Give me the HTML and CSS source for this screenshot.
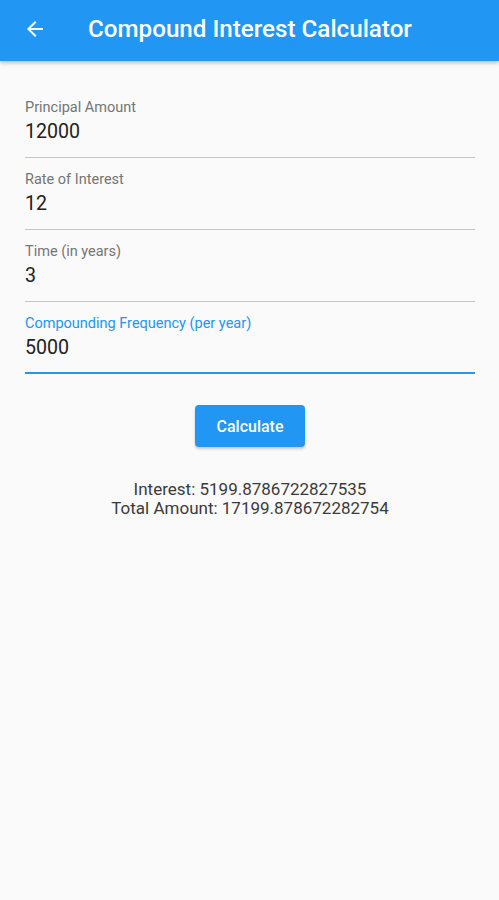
FILE: index.html
```html
<!DOCTYPE html>
<html>
<head>
<meta charset="utf-8">
<link rel="stylesheet" href="styles.css">
</head>
<body>
<header class="appbar">
  <button class="back" aria-label="Back">
    <svg width="24" height="24" viewBox="0 0 24 24"><path fill="#fff" d="M20 11H7.83l5.59-5.59L12 4l-8 8 8 8 1.41-1.41L7.83 13H20v-2z"/></svg>
  </button>
  <h1 class="title">Compound Interest Calculator</h1>
</header>
<main class="content">
  <div class="field">
    <label class="label">Principal Amount</label>
    <div class="value">12000</div>
  </div>
  <div class="field">
    <label class="label">Rate of Interest</label>
    <div class="value">12</div>
  </div>
  <div class="field">
    <label class="label">Time (in years)</label>
    <div class="value">3</div>
  </div>
  <div class="field focused">
    <label class="label">Compounding Frequency (per year)</label>
    <div class="value">5000</div>
  </div>
  <div class="actions">
    <button class="calc">Calculate</button>
  </div>
  <div class="results">
    <div>Interest: 5199.8786722827535</div>
    <div>Total Amount: 17199.878672282754</div>
  </div>
</main>
</body>
</html>
```
FILE: styles.css
```css
* { box-sizing: border-box; }
html, body { margin: 0; padding: 0; }
body {
  background: #fafafa;
  font-family: Roboto, "Noto Sans", sans-serif;
  width: 499px;
  height: 900px;
  overflow: hidden;
}
.appbar {
  height: 61px;
  background: #2196f3;
  display: flex;
  align-items: center;
  padding-bottom: 3px;
  box-shadow: 0 2px 4px rgba(0,0,0,0.25);
}
.back {
  background: none;
  border: 0;
  padding: 0;
  margin-left: 23px;
  width: 24px;
  height: 24px;
  display: flex;
}
.title {
  margin: 0 0 0 41px;
  color: #fff;
  font-size: 24.2px;
  font-weight: 500;
  letter-spacing: 0;
}
.content {
  padding: 39px 24px 0 25px;
}
.field {
  display: flex;
  flex-direction: column;
  gap: 4px;
  padding-bottom: 13px;
  border-bottom: 1px solid #c4c4c4;
  margin-bottom: 14px;
}
.label {
  font-size: 14.5px;
  line-height: 16px;
  color: #757575;
}
.value {
  font-size: 19.6px;
  line-height: 24px;
  color: #212121;
}
.field.focused {
  border-bottom: 2px solid #2196f3;
  padding-bottom: 12px;
}
.field.focused .label { color: #2196f3; }
.actions {
  display: flex;
  justify-content: center;
  margin-top: 31px;
}
.calc {
  width: 110px;
  height: 42px;
  background: #2196f3;
  color: #fff;
  border: 0;
  border-radius: 4px;
  font-family: Roboto, sans-serif;
  font-size: 16px;
  font-weight: 500;
  box-shadow: 0 2px 3px rgba(0,0,0,0.2);
}
.results {
  margin-top: 33px;
  text-align: center;
  font-size: 17px;
  line-height: 19px;
  color: #3a3a3a;
}
```
